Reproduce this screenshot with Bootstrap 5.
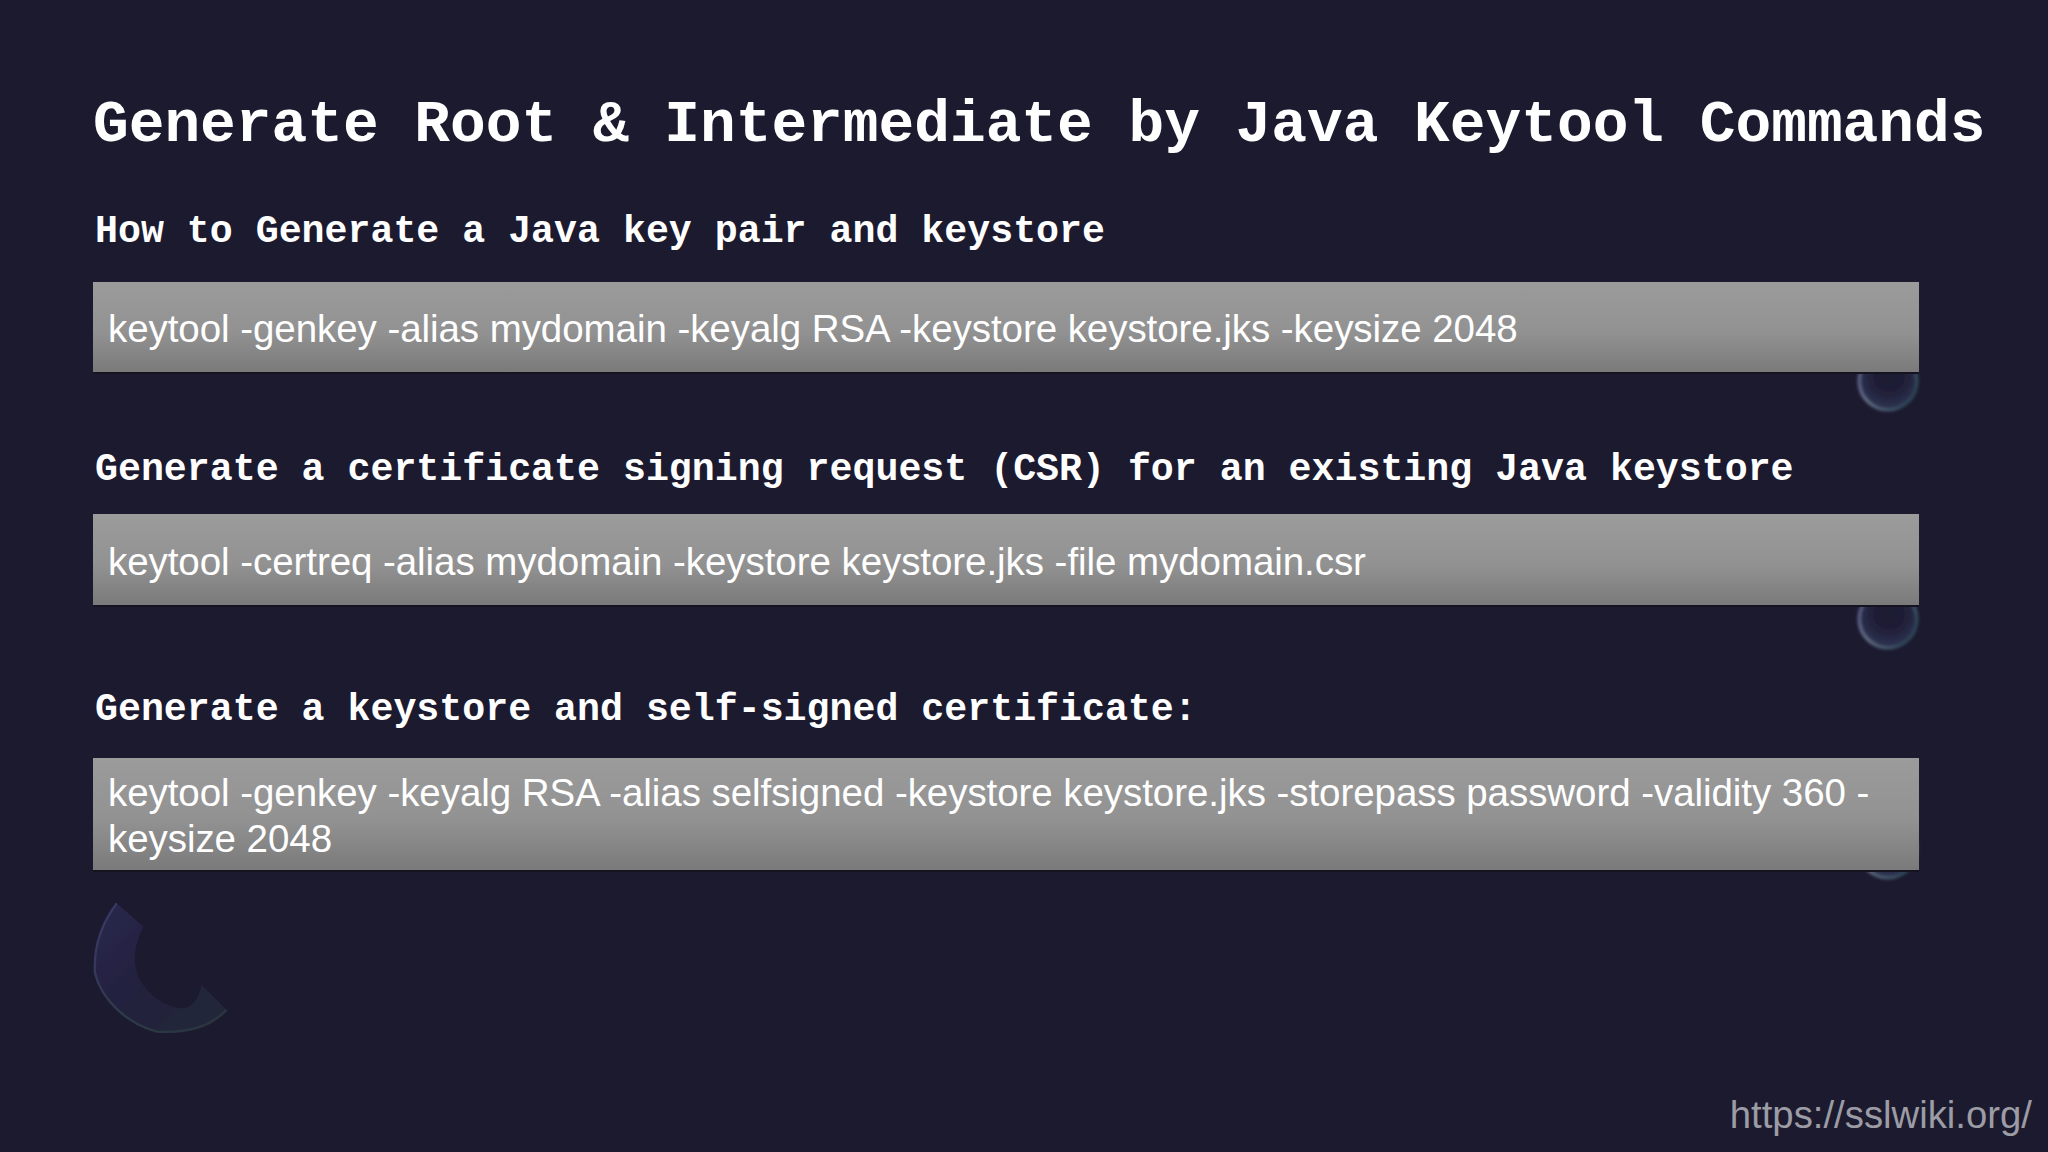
<!DOCTYPE html>
<html lang="en">
<head>
<meta charset="utf-8">
<title>Generate Root &amp; Intermediate by Java Keytool Commands</title>
<link href="https://cdn.jsdelivr.net/npm/bootstrap@5.3.0/dist/css/bootstrap.min.css" rel="stylesheet">
<style>
html, body { margin: 0; height: 1152px; overflow: hidden; background: #1c1a2f; }
.slide-page { position: relative; height: 1152px; width: 2048px; padding: 90px 0 0 93px; }
.slide-decor { position: absolute; left: 0; top: 0; width: 2048px; height: 1152px; }
.slide-flow { position: relative; height: 100%; }
.slide-title { font: 700 59.5px/70px "Liberation Mono", monospace; color: #fff; margin: 0 0 49px; white-space: nowrap; }
.cmd-head { font: 700 38.25px/46px "Liberation Mono", monospace; color: #fff; margin: 0 0 27px 2px; white-space: nowrap; }
.cmd-head.cmd-head-tight { margin-bottom: 21px; }
.cmd-head.cmd-head-mid { margin-bottom: 25px; }
.cmd-box { width: 1826px; background: linear-gradient(#9b9b9b, #929292 55%, #7a7a7a); border-bottom: 2px solid #14131f; font: 400 38.5px/46px "Liberation Sans", Arial, sans-serif; letter-spacing: -.06px; color: #fff; padding: 24px 14px 20px 15px; margin-bottom: 73px; }
.cmd-box.cmd-gap { margin-bottom: 80px; padding-top: 25px; padding-bottom: 20px; }
.cmd-box.cmd-wrap { padding: 12px 14px 8px 15px; }
.site-url { position: absolute; right: 16px; bottom: 14px; font: 400 38.3px/46px "Liberation Sans", Arial, sans-serif; color: #9c9ca5; }
</style>
</head>
<body>
<div class="slide-page">
  <svg class="slide-decor" viewBox="0 0 2048 1152" aria-hidden="true">
    <defs>
      <radialGradient id="bub" cx="52%" cy="42%" r="55%">
        <stop offset="0" stop-color="#1c1a2f"/>
        <stop offset=".55" stop-color="#202039"/>
        <stop offset="1" stop-color="#2e3452"/>
      </radialGradient>
      <linearGradient id="rim" x1="0" y1="0" x2="1" y2=".6">
        <stop offset="0" stop-color="#55558a"/>
        <stop offset=".5" stop-color="#667288"/>
        <stop offset="1" stop-color="#2d4658"/>
      </linearGradient>
      <linearGradient id="arc" x1="0" y1="0" x2="1" y2="1">
        <stop offset="0" stop-color="#2a274d"/>
        <stop offset=".55" stop-color="#22213d"/>
        <stop offset="1" stop-color="#242a38"/>
      </linearGradient>
      <linearGradient id="arcedge" x1="0" y1="0" x2="1" y2="1">
        <stop offset="0" stop-color="#3a3768"/>
        <stop offset=".6" stop-color="#2d3a45"/>
        <stop offset="1" stop-color="#2b3340"/>
      </linearGradient>
      <filter id="soft"><feGaussianBlur stdDeviation="1.4"/></filter>
      <filter id="softer"><feGaussianBlur stdDeviation="2.2"/></filter>
    </defs>
    <g filter="url(#soft)">
      <circle cx="1888" cy="381" r="29" fill="url(#bub)" stroke="url(#rim)" stroke-width="3"/>
      <circle cx="1888" cy="619" r="29" fill="url(#bub)" stroke="url(#rim)" stroke-width="3"/>
      <circle cx="1888" cy="849" r="29" fill="url(#bub)" stroke="url(#rim)" stroke-width="3"/>
    </g>
    <g transform="translate(70 880) scale(.3333)" filter="url(#softer)">
      <path d="M140 70 L220 140 C195 190 185 240 205 290 C235 350 290 385 345 385 C365 380 385 360 395 315 L470 390 C420 440 360 460 260 455 C170 430 95 360 75 280 C70 200 95 130 140 70 Z" fill="url(#arc)"/>
      <path d="M470 390 C420 440 360 460 260 455 C170 430 95 360 75 280 C70 200 95 130 140 70" fill="none" stroke="url(#arcedge)" stroke-width="7"/>
    </g>
  </svg>
  <div class="slide-flow">
    <h1 class="slide-title">Generate Root &amp; Intermediate by Java Keytool Commands</h1>
    <h2 class="cmd-head">How to Generate a Java key pair and keystore</h2>
    <div class="cmd-box">keytool -genkey -alias mydomain -keyalg RSA -keystore keystore.jks -keysize 2048</div>
    <h2 class="cmd-head cmd-head-tight">Generate a certificate signing request (CSR) for an existing Java keystore</h2>
    <div class="cmd-box cmd-gap">keytool -certreq -alias mydomain -keystore keystore.jks -file mydomain.csr</div>
    <h2 class="cmd-head cmd-head-mid">Generate a keystore and self-signed certificate:</h2>
    <div class="cmd-box cmd-wrap">keytool -genkey -keyalg RSA -alias selfsigned -keystore keystore.jks -storepass password -validity 360 -keysize 2048</div>
  </div>
  <div class="site-url">https://sslwiki.org/</div>
</div>
<script src="https://cdn.jsdelivr.net/npm/bootstrap@5.3.0/dist/js/bootstrap.bundle.min.js"></script>
</body>
</html>
